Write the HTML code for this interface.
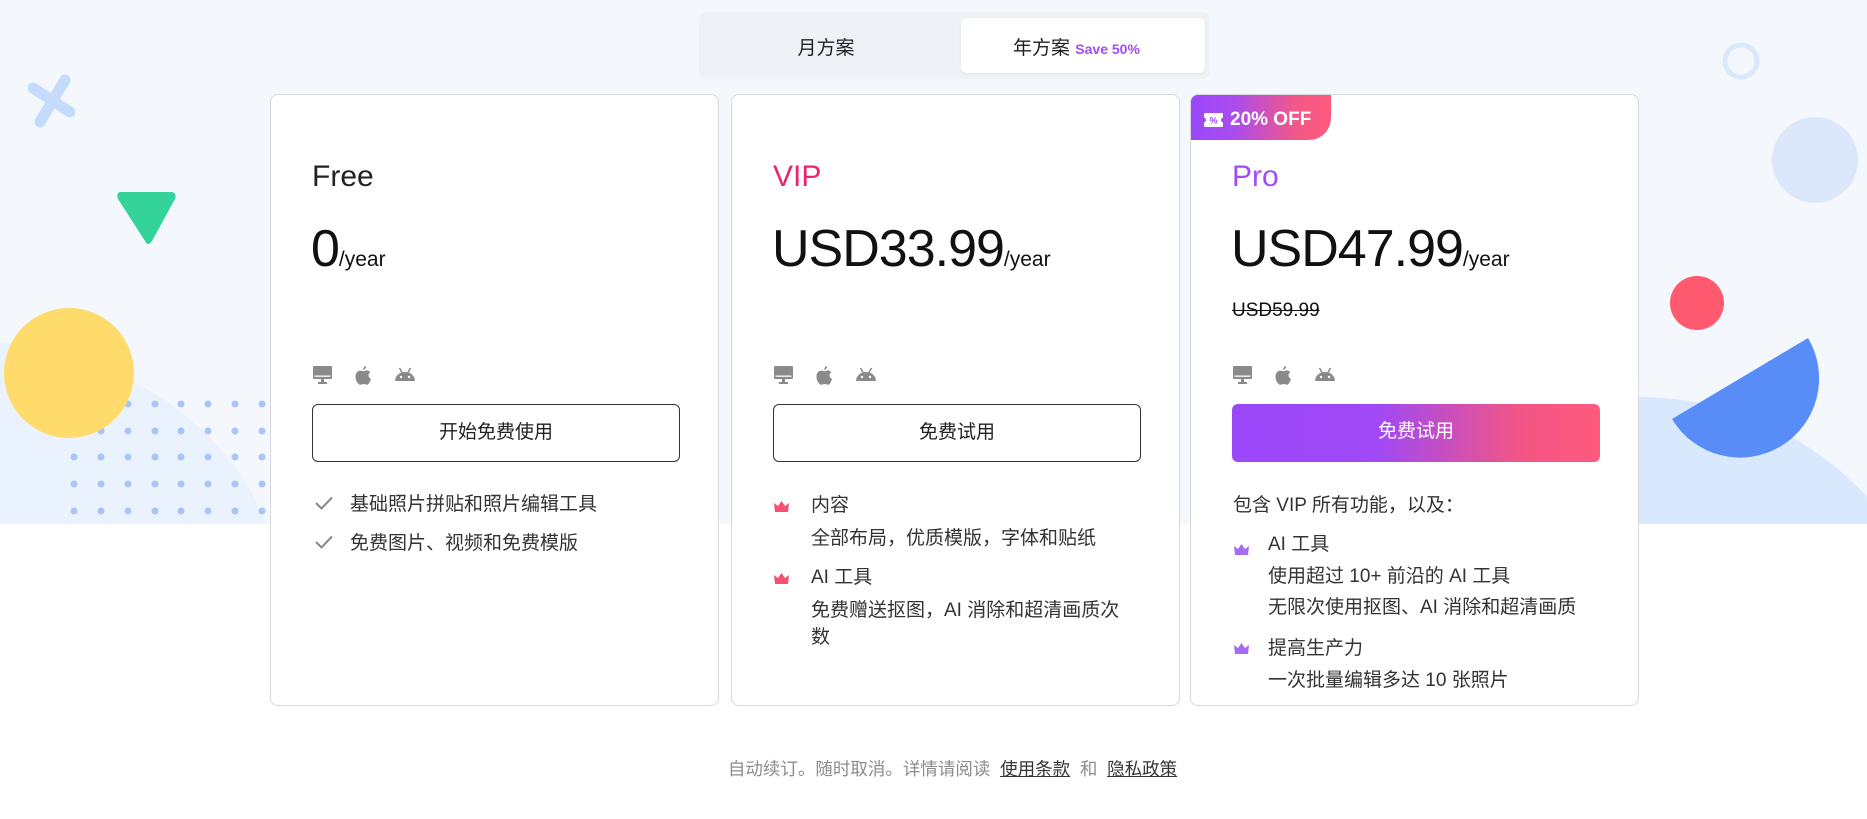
<!DOCTYPE html>
<html><head><meta charset="utf-8"><style>
*{margin:0;padding:0;box-sizing:border-box}
html,body{width:1867px;height:819px;overflow:hidden}
body{position:relative;background:#fff;font-family:"Liberation Sans","Noto Sans CJK SC",sans-serif;color:#222}
.abs{position:absolute}
.bg{left:0;top:0;width:1867px;height:524px;background:#f4f8fd;overflow:hidden}
.card{position:absolute;top:94px;width:449px;height:612px;background:#fff;border:1px solid #d6dae0;border-radius:8px}
.t{position:absolute;white-space:nowrap}
.name{font-size:30px;top:65px;left:41px}
.price{font-size:52px;top:124px;left:40px;letter-spacing:-1px;color:#111}
.price span{font-size:21px;letter-spacing:0}
.icons{position:absolute;top:271px;left:42px;display:flex;gap:23px}
.btn{position:absolute;left:41px;top:309px;width:368px;height:58px;border:1px solid #333;border-radius:6px;text-align:center;line-height:56px;font-size:19px;color:#222}
.f{font-size:19px;color:#333;position:absolute;white-space:nowrap;line-height:24px}
.crown{position:absolute;width:15px;height:11px}
</style></head><body>
<div class="abs bg">
  <svg width="1867" height="524" style="position:absolute;left:0;top:0">
    <ellipse cx="-40" cy="600" rx="320" ry="260" fill="#eaf2fd"/>
    <circle cx="1640" cy="705" r="308" fill="#d9e9fd"/>
    <g fill="#a9c5f7">
      <g id="r"><circle cx="74" cy="404" r="3.5"/><circle cx="101" cy="404" r="3.5"/><circle cx="128" cy="404" r="3.5"/><circle cx="155" cy="404" r="3.5"/><circle cx="181" cy="404" r="3.5"/><circle cx="208" cy="404" r="3.5"/><circle cx="235" cy="404" r="3.5"/><circle cx="262" cy="404" r="3.5"/></g>
      <use href="#r" y="27"/><use href="#r" y="53"/><use href="#r" y="80"/><use href="#r" y="107"/>
    </g>
    <circle cx="69" cy="373" r="65" fill="#ffdb6c"/>
    <g stroke="#c5dbfd" stroke-width="11" stroke-linecap="round"><line x1="33" y1="88" x2="70" y2="112"/><line x1="65" y1="80" x2="40" y2="122"/></g>
    <path d="M120 192 L172 192 Q177 193 175 199 L152 241 Q148 247 145 241 L118 199 Q116 193 120 192Z" fill="#34d399"/>
    <circle cx="1741" cy="61" r="16" fill="none" stroke="#d9e8fd" stroke-width="5"/>
    <circle cx="1815" cy="160" r="43" fill="#dbe8fb"/>
    <circle cx="1697" cy="303" r="27" fill="#ff5a6f"/>
    <path d="M1808 338 L1672 419 A79 79 0 0 0 1808 338Z" fill="#588df8"/>
  </svg>
</div>

<div class="abs" style="left:699px;top:12px;width:511px;height:67px;background:#eef2f7;border-radius:8px"></div>
<div class="abs" style="left:961px;top:18px;width:244px;height:55px;background:#fff;border-radius:6px;box-shadow:0 1px 3px rgba(0,0,0,.05)"></div>
<div class="t" style="left:695px;width:262px;top:33px;text-align:center;font-size:19px;color:#222">月方案</div>
<div class="t" style="left:1013px;top:33px;font-size:19px;color:#222">年方案 <span style="color:#a24bf7;font-size:14px;font-weight:bold">Save 50%</span></div>

<!-- Free -->
<div class="card" style="left:270px">
  <div class="t name">Free</div>
  <div class="t price">0<span>/year</span></div>
  <div class="icons">
    <svg width="19" height="18" viewBox="0 0 19 18"><rect x="0" y="0" width="19" height="13" rx="1" fill="#8a8a8a"/><rect x="1.5" y="9.5" width="16" height="1.3" fill="#fff"/><rect x="8" y="13" width="3" height="3" fill="#8a8a8a"/><rect x="5" y="16" width="9" height="2" fill="#8a8a8a"/></svg>
    <svg width="17" height="19" viewBox="0 0 17 19"><path d="M11 0 C11.3 2 9.8 3.7 8.2 3.8 C8 2 9.5 0.3 11 0Z M8.5 5.2 C9.5 5.2 10.5 4.4 12 4.4 C13.3 4.4 14.6 5.1 15.3 6.3 C13.7 7.2 13.3 9 13.7 10.4 C14.1 11.8 15.2 12.6 16 12.9 C15.4 15.3 13.6 18.8 11.8 18.8 C10.6 18.8 10.2 18 8.6 18 C7 18 6.5 18.8 5.3 18.8 C3.2 18.8 0.5 14.8 0.5 10.7 C0.5 6.9 2.8 4.6 5.1 4.6 C6.5 4.6 7.5 5.2 8.5 5.2Z" fill="#8a8a8a"/></svg>
    <svg width="20" height="16" viewBox="0 0 20 16"><path d="M0 15 C0.3 9.5 4.5 6 10 6 C15.5 6 19.7 9.5 20 15Z" fill="#8a8a8a"/><line x1="4.5" y1="2" x2="7" y2="6.5" stroke="#8a8a8a" stroke-width="1.5"/><line x1="15.5" y1="2" x2="13" y2="6.5" stroke="#8a8a8a" stroke-width="1.5"/><circle cx="6" cy="11" r="1.2" fill="#fff"/><circle cx="14" cy="11" r="1.2" fill="#fff"/></svg>
  </div>
  <div class="btn">开始免费使用</div>
  <svg class="abs" style="left:44px;top:401px" width="18" height="14" viewBox="0 0 18 14"><path d="M1 7 L6.5 12.5 L17 1.5" fill="none" stroke="#888" stroke-width="2"/></svg>
  <div class="f" style="left:79px;top:398px">基础照片拼贴和照片编辑工具</div>
  <svg class="abs" style="left:44px;top:440px" width="18" height="14" viewBox="0 0 18 14"><path d="M1 7 L6.5 12.5 L17 1.5" fill="none" stroke="#888" stroke-width="2"/></svg>
  <div class="f" style="left:79px;top:437px">免费图片、视频和免费模版</div>
</div>

<!-- VIP -->
<div class="card" style="left:731px">
  <div class="t name" style="color:#e8256e">VIP</div>
  <div class="t price">USD33.99<span>/year</span></div>
  <div class="icons">
    <svg width="19" height="18" viewBox="0 0 19 18"><rect x="0" y="0" width="19" height="13" rx="1" fill="#8a8a8a"/><rect x="1.5" y="9.5" width="16" height="1.3" fill="#fff"/><rect x="8" y="13" width="3" height="3" fill="#8a8a8a"/><rect x="5" y="16" width="9" height="2" fill="#8a8a8a"/></svg>
    <svg width="17" height="19" viewBox="0 0 17 19"><path d="M11 0 C11.3 2 9.8 3.7 8.2 3.8 C8 2 9.5 0.3 11 0Z M8.5 5.2 C9.5 5.2 10.5 4.4 12 4.4 C13.3 4.4 14.6 5.1 15.3 6.3 C13.7 7.2 13.3 9 13.7 10.4 C14.1 11.8 15.2 12.6 16 12.9 C15.4 15.3 13.6 18.8 11.8 18.8 C10.6 18.8 10.2 18 8.6 18 C7 18 6.5 18.8 5.3 18.8 C3.2 18.8 0.5 14.8 0.5 10.7 C0.5 6.9 2.8 4.6 5.1 4.6 C6.5 4.6 7.5 5.2 8.5 5.2Z" fill="#8a8a8a"/></svg>
    <svg width="20" height="16" viewBox="0 0 20 16"><path d="M0 15 C0.3 9.5 4.5 6 10 6 C15.5 6 19.7 9.5 20 15Z" fill="#8a8a8a"/><line x1="4.5" y1="2" x2="7" y2="6.5" stroke="#8a8a8a" stroke-width="1.5"/><line x1="15.5" y1="2" x2="13" y2="6.5" stroke="#8a8a8a" stroke-width="1.5"/><circle cx="6" cy="11" r="1.2" fill="#fff"/><circle cx="14" cy="11" r="1.2" fill="#fff"/></svg>
  </div>
  <div class="btn">免费试用</div>
  <svg class="crown" style="left:42px;top:406px" viewBox="0 0 15 11"><path d="M0 2 L4 5 L7.5 0 L11 5 L15 2 L14 11 L1 11Z" fill="#f4506f"/></svg>
  <div class="f" style="left:79px;top:399px">内容</div>
  <div class="f" style="left:79px;top:432px">全部布局，优质模版，字体和贴纸</div>
  <svg class="crown" style="left:42px;top:478px" viewBox="0 0 15 11"><path d="M0 2 L4 5 L7.5 0 L11 5 L15 2 L14 11 L1 11Z" fill="#f4506f"/></svg>
  <div class="f" style="left:79px;top:471px">AI 工具</div>
  <div class="f" style="left:79px;top:504px">免费赠送抠图，AI 消除和超清画质次</div>
  <div class="f" style="left:79px;top:531px">数</div>
</div>

<!-- Pro -->
<div class="card" style="left:1190px;overflow:hidden">
  <div class="abs" style="left:-1px;top:-1px;width:141px;height:46px;background:linear-gradient(90deg,#9b47fa 0%,#a84cf0 30%,#f25888 75%,#ff5a7e 100%);border-radius:8px 0 22px 0"></div>
  <svg class="abs" style="left:13px;top:18px" width="19" height="14" viewBox="0 0 19 14"><path d="M1 0 H18 Q19 0 19 1 V4.5 Q17 5 17 7 Q17 9 19 9.5 V13 Q19 14 18 14 H1 Q0 14 0 13 V9.5 Q2 9 2 7 Q2 5 0 4.5 V1 Q0 0 1 0Z" fill="#fff"/><text x="9.5" y="10.5" font-size="9" font-family="Liberation Sans" fill="#9b47fa" text-anchor="middle" font-weight="bold">%</text></svg>
  <div class="t" style="left:39px;top:14px;font-size:19px;font-weight:bold;color:#fff">20% OFF</div>
  <div class="t name" style="color:#a24bf7">Pro</div>
  <div class="t price">USD47.99<span>/year</span></div>
  <div class="t" style="left:41px;top:205px;font-size:19px;color:#111;text-decoration:line-through">USD59.99</div>
  <div class="icons">
    <svg width="19" height="18" viewBox="0 0 19 18"><rect x="0" y="0" width="19" height="13" rx="1" fill="#8a8a8a"/><rect x="1.5" y="9.5" width="16" height="1.3" fill="#fff"/><rect x="8" y="13" width="3" height="3" fill="#8a8a8a"/><rect x="5" y="16" width="9" height="2" fill="#8a8a8a"/></svg>
    <svg width="17" height="19" viewBox="0 0 17 19"><path d="M11 0 C11.3 2 9.8 3.7 8.2 3.8 C8 2 9.5 0.3 11 0Z M8.5 5.2 C9.5 5.2 10.5 4.4 12 4.4 C13.3 4.4 14.6 5.1 15.3 6.3 C13.7 7.2 13.3 9 13.7 10.4 C14.1 11.8 15.2 12.6 16 12.9 C15.4 15.3 13.6 18.8 11.8 18.8 C10.6 18.8 10.2 18 8.6 18 C7 18 6.5 18.8 5.3 18.8 C3.2 18.8 0.5 14.8 0.5 10.7 C0.5 6.9 2.8 4.6 5.1 4.6 C6.5 4.6 7.5 5.2 8.5 5.2Z" fill="#8a8a8a"/></svg>
    <svg width="20" height="16" viewBox="0 0 20 16"><path d="M0 15 C0.3 9.5 4.5 6 10 6 C15.5 6 19.7 9.5 20 15Z" fill="#8a8a8a"/><line x1="4.5" y1="2" x2="7" y2="6.5" stroke="#8a8a8a" stroke-width="1.5"/><line x1="15.5" y1="2" x2="13" y2="6.5" stroke="#8a8a8a" stroke-width="1.5"/><circle cx="6" cy="11" r="1.2" fill="#fff"/><circle cx="14" cy="11" r="1.2" fill="#fff"/></svg>
  </div>
  <div class="btn" style="border:none;color:#fff;background:linear-gradient(90deg,#9b47fa 0%,#a049f5 40%,#f25585 78%,#ff5a7e 100%)">免费试用</div>
  <div class="f" style="left:42px;top:399px">包含 VIP 所有功能，以及：</div>
  <svg class="crown" style="left:43px;top:449px" viewBox="0 0 15 11"><path d="M0 2 L4 5 L7.5 0 L11 5 L15 2 L14 11 L1 11Z" fill="#a66bf0"/></svg>
  <div class="f" style="left:77px;top:438px">AI 工具</div>
  <div class="f" style="left:77px;top:470px">使用超过 10+ 前沿的 AI 工具</div>
  <div class="f" style="left:77px;top:501px">无限次使用抠图、AI 消除和超清画质</div>
  <svg class="crown" style="left:43px;top:548px" viewBox="0 0 15 11"><path d="M0 2 L4 5 L7.5 0 L11 5 L15 2 L14 11 L1 11Z" fill="#a66bf0"/></svg>
  <div class="f" style="left:77px;top:542px">提高生产力</div>
  <div class="f" style="left:77px;top:574px">一次批量编辑多达 10 张照片</div>
</div>

<div class="t" style="left:0;width:1867px;top:757px;padding-left:38px;text-align:center;font-size:17.5px;line-height:24px;color:#8c8c8c">自动续订。随时取消。详情请阅读&nbsp;&nbsp;<span style="color:#333;text-decoration:underline">使用条款</span>&nbsp;&nbsp;和&nbsp;&nbsp;<span style="color:#333;text-decoration:underline">隐私政策</span></div>
</body></html>
